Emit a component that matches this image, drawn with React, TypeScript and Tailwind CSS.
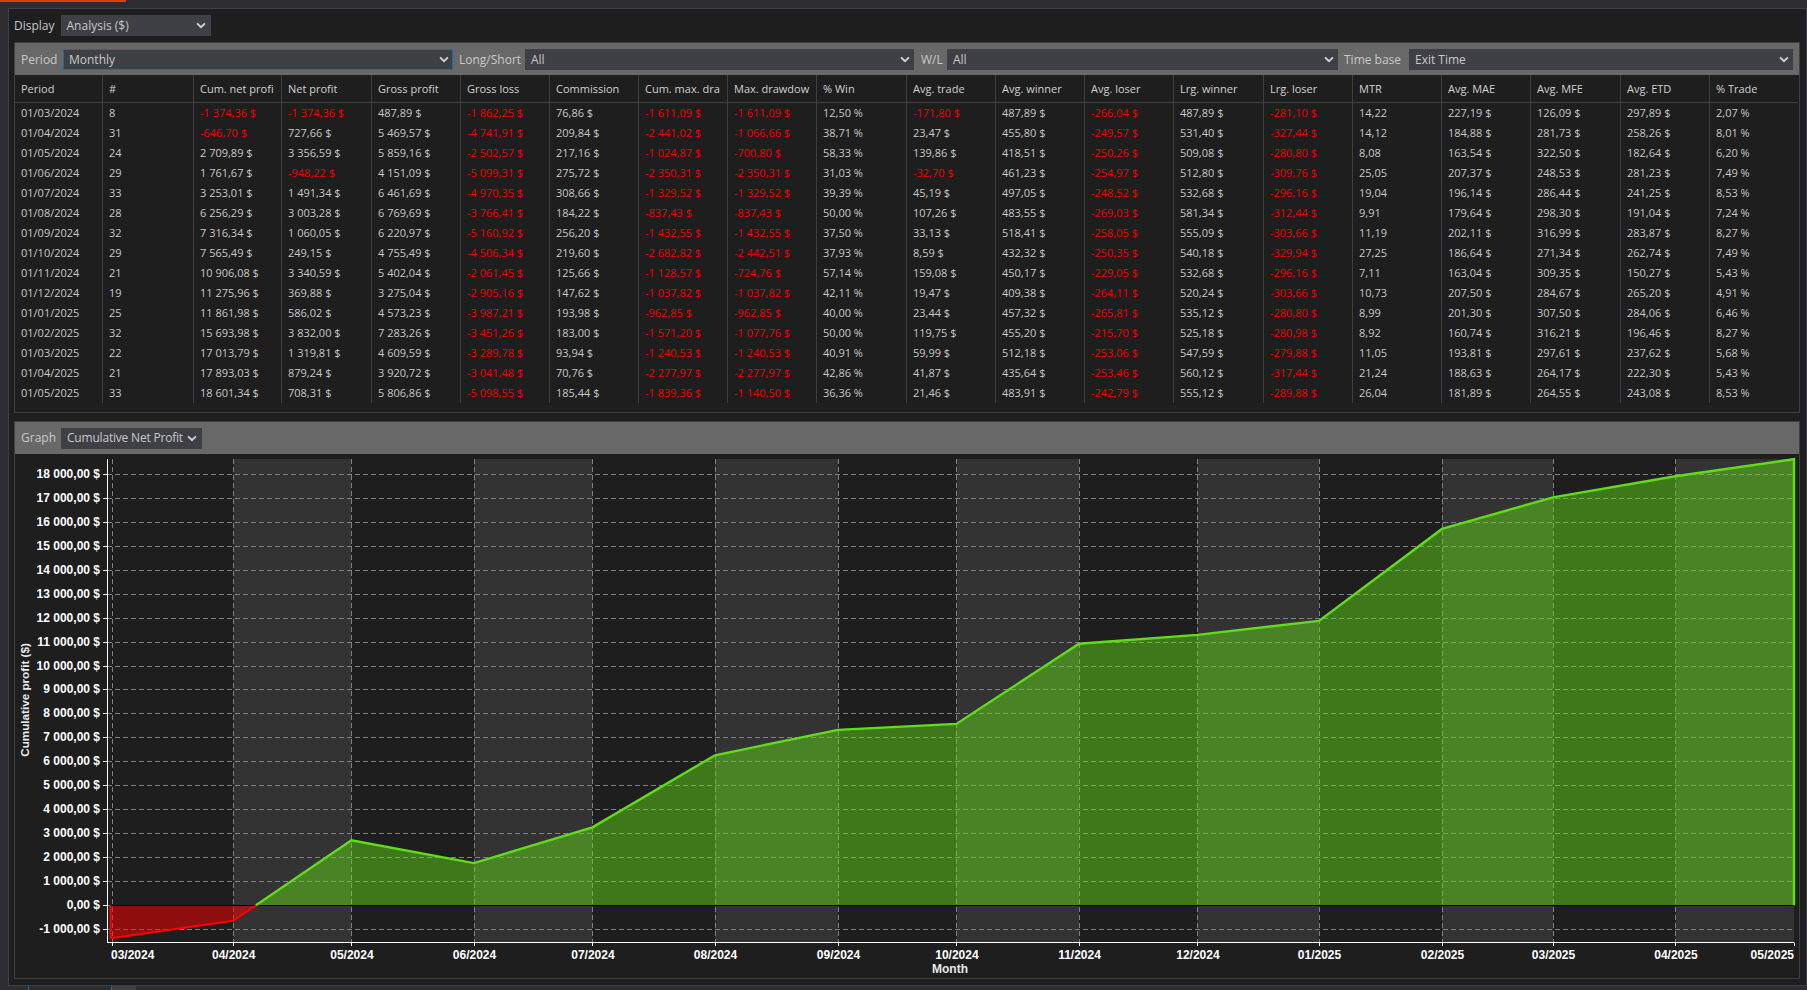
import React from "react";

const headers = ["Period","#","Cum. net profi","Net profit","Gross profit","Gross loss","Commission","Cum. max. dra","Max. drawdow","% Win","Avg. trade","Avg. winner","Avg. loser","Lrg. winner","Lrg. loser","MTR","Avg. MAE","Avg. MFE","Avg. ETD","% Trade"];
const widths = ["w-[88px]","w-[91px]","w-[88px]","w-[90px]","w-[89px]","w-[89px]","w-[89px]","w-[89px]","w-[89px]","w-[90px]","w-[89px]","w-[89px]","w-[89px]","w-[90px]","w-[89px]","w-[89px]","w-[89px]","w-[90px]","w-[89px]","w-[88px]"];
const rows = [
"01/03/2024|8|-1 374,36 $|-1 374,36 $|487,89 $|-1 862,25 $|76,86 $|-1 611,09 $|-1 611,09 $|12,50 %|-171,80 $|487,89 $|-266,04 $|487,89 $|-281,10 $|14,22|227,19 $|126,09 $|297,89 $|2,07 %",
"01/04/2024|31|-646,70 $|727,66 $|5 469,57 $|-4 741,91 $|209,84 $|-2 441,02 $|-1 066,66 $|38,71 %|23,47 $|455,80 $|-249,57 $|531,40 $|-327,44 $|14,12|184,88 $|281,73 $|258,26 $|8,01 %",
"01/05/2024|24|2 709,89 $|3 356,59 $|5 859,16 $|-2 502,57 $|217,16 $|-1 024,87 $|-700,80 $|58,33 %|139,86 $|418,51 $|-250,26 $|509,08 $|-280,80 $|8,08|163,54 $|322,50 $|182,64 $|6,20 %",
"01/06/2024|29|1 761,67 $|-948,22 $|4 151,09 $|-5 099,31 $|275,72 $|-2 350,31 $|-2 350,31 $|31,03 %|-32,70 $|461,23 $|-254,97 $|512,80 $|-309,76 $|25,05|207,37 $|248,53 $|281,23 $|7,49 %",
"01/07/2024|33|3 253,01 $|1 491,34 $|6 461,69 $|-4 970,35 $|308,66 $|-1 329,52 $|-1 329,52 $|39,39 %|45,19 $|497,05 $|-248,52 $|532,68 $|-296,16 $|19,04|196,14 $|286,44 $|241,25 $|8,53 %",
"01/08/2024|28|6 256,29 $|3 003,28 $|6 769,69 $|-3 766,41 $|184,22 $|-837,43 $|-837,43 $|50,00 %|107,26 $|483,55 $|-269,03 $|581,34 $|-312,44 $|9,91|179,64 $|298,30 $|191,04 $|7,24 %",
"01/09/2024|32|7 316,34 $|1 060,05 $|6 220,97 $|-5 160,92 $|256,20 $|-1 432,55 $|-1 432,55 $|37,50 %|33,13 $|518,41 $|-258,05 $|555,09 $|-303,66 $|11,19|202,11 $|316,99 $|283,87 $|8,27 %",
"01/10/2024|29|7 565,49 $|249,15 $|4 755,49 $|-4 506,34 $|219,60 $|-2 682,82 $|-2 442,51 $|37,93 %|8,59 $|432,32 $|-250,35 $|540,18 $|-329,94 $|27,25|186,64 $|271,34 $|262,74 $|7,49 %",
"01/11/2024|21|10 906,08 $|3 340,59 $|5 402,04 $|-2 061,45 $|125,66 $|-1 128,57 $|-724,76 $|57,14 %|159,08 $|450,17 $|-229,05 $|532,68 $|-296,16 $|7,11|163,04 $|309,35 $|150,27 $|5,43 %",
"01/12/2024|19|11 275,96 $|369,88 $|3 275,04 $|-2 905,16 $|147,62 $|-1 037,82 $|-1 037,82 $|42,11 %|19,47 $|409,38 $|-264,11 $|520,24 $|-303,66 $|10,73|207,50 $|284,67 $|265,20 $|4,91 %",
"01/01/2025|25|11 861,98 $|586,02 $|4 573,23 $|-3 987,21 $|193,98 $|-962,85 $|-962,85 $|40,00 %|23,44 $|457,32 $|-265,81 $|535,12 $|-280,80 $|8,99|201,30 $|307,50 $|284,06 $|6,46 %",
"01/02/2025|32|15 693,98 $|3 832,00 $|7 283,26 $|-3 451,26 $|183,00 $|-1 571,20 $|-1 077,76 $|50,00 %|119,75 $|455,20 $|-215,70 $|525,18 $|-280,98 $|8,92|160,74 $|316,21 $|196,46 $|8,27 %",
"01/03/2025|22|17 013,79 $|1 319,81 $|4 609,59 $|-3 289,78 $|93,94 $|-1 240,53 $|-1 240,53 $|40,91 %|59,99 $|512,18 $|-253,06 $|547,59 $|-279,88 $|11,05|193,81 $|297,61 $|237,62 $|5,68 %",
"01/04/2025|21|17 893,03 $|879,24 $|3 920,72 $|-3 041,48 $|70,76 $|-2 277,97 $|-2 277,97 $|42,86 %|41,87 $|435,64 $|-253,46 $|560,12 $|-317,44 $|21,24|188,63 $|264,17 $|222,30 $|5,43 %",
"01/05/2025|33|18 601,34 $|708,31 $|5 806,86 $|-5 098,55 $|185,44 $|-1 839,36 $|-1 140,50 $|36,36 %|21,46 $|483,91 $|-242,79 $|555,12 $|-289,88 $|26,04|181,89 $|264,55 $|243,08 $|8,53 %",
].map((r) => r.split("|"));

function Chevron() {
  return (
    <svg width="10" height="7" viewBox="0 0 11 8" className="shrink-0">
      <path d="M1 1.5 L5.5 6 L10 1.5" fill="none" stroke="#d0d0d0" strokeWidth="2.2" />
    </svg>
  );
}

function Select({ value, className }: { value: string; className: string }) {
  return (
    <div className={"flex items-center justify-between bg-[#3f3f46] text-[#c8c8c8] pl-[6px] shrink-0 " + className}>
      <span className="whitespace-nowrap">{value}</span>
      <Chevron />
    </div>
  );
}

const months = ["03/2024","04/2024","05/2024","06/2024","07/2024","08/2024","09/2024","10/2024","11/2024","12/2024","01/2025","02/2025","03/2025","04/2025","05/2025"];
const mx = [111.5,233.2,351.4,474,592.4,715,838,956.4,1079,1197.4,1319,1442,1553,1675.4,1794];
const cum = [-1374.36,-646.7,2709.89,1761.67,3253.01,6256.29,7316.34,7565.49,10906.08,11275.96,11861.98,15693.98,17013.79,17893.03,18601.34];
const Y = (v: number) => 905.3 - v * 0.02398;
const yTicks = Array.from({ length: 20 }, (_, i) => 18000 - i * 1000);
const fmtY = (v: number) => {
  const s = Math.abs(v).toString();
  const t = s.length > 3 ? s.slice(0, -3) + " " + s.slice(-3) : s;
  return (v < 0 ? "-" : "") + t + ",00 $";
};
const crossX = mx[1] + ((mx[2] - mx[1]) * 646.7) / (646.7 + 2709.89);
const linePts = mx.map((x, i) => `${x},${Y(cum[i])}`);
const greenTop = [`${crossX},${Y(0)}`, ...linePts.slice(2)].join(" ");
const redTop = [`${mx[0] - 1},${Y(0)}`, `${mx[0] - 1},${Y(cum[0])}`, `${mx[1]},${Y(cum[1])}`, `${crossX},${Y(0)}`].join(" ");

function Chart() {
  return (
    <svg width="1783" height="525" viewBox="15 454 1783 525" className="block font-['Liberation_Sans',sans-serif] font-bold">
      {[1, 3, 5, 7, 9, 11, 13].map((i) => (
        <rect key={i} x={mx[i]} y={459} width={mx[i + 1] - mx[i]} height={483} fill="#333333" />
      ))}
      {yTicks.map((v) => (
        <line key={v} x1={107} x2={1794} y1={Math.round(Y(v)) + 0.5} y2={Math.round(Y(v)) + 0.5} stroke="#808080" strokeDasharray="5 3" />
      ))}
      {mx.slice(0, -1).map((x) => (
        <line key={x} x1={Math.round(x) + 0.5} x2={Math.round(x) + 0.5} y1={459} y2={942} stroke="#808080" strokeDasharray="5 3" />
      ))}
      <polygon points={`${greenTop} 1794,${Y(0)}`} fill="#63dc18" fillOpacity="0.48" />
      <polygon points={redTop} fill="#ff0000" fillOpacity="0.5" />
      <line x1={110} x2={1794} y1={905.5} y2={905.5} stroke="#000000" />
      <polyline points={redTop} fill="none" stroke="#ff0000" strokeWidth="2" />
      <polyline points={`${greenTop} 1794,${Y(0)}`} fill="none" stroke="#60dc18" strokeWidth="2.4" />
      <line x1={107.5} x2={107.5} y1={459} y2={943} stroke="#ffffff" />
      <line x1={107} x2={1794.5} y1={942.5} y2={942.5} stroke="#ffffff" />
      {yTicks.map((v) => (
        <g key={v}>
          <line x1={103} x2={107} y1={Math.round(Y(v)) + 0.5} y2={Math.round(Y(v)) + 0.5} stroke="#ffffff" />
          <text x={100} y={Y(v) + 4} textAnchor="end" fontSize="12" fill="#ffffff">{fmtY(v)}</text>
        </g>
      ))}
      {mx.map((x, i) => (
        <g key={x}>
          <line x1={Math.round(x) + 0.5} x2={Math.round(x) + 0.5} y1={943} y2={946} stroke="#ffffff" />
          <text x={i === 0 ? 111 : i === 14 ? 1794 : x + 0.5} y={959} textAnchor={i === 0 ? "start" : i === 14 ? "end" : "middle"} fontSize="12" fill="#ffffff">{months[i]}</text>
        </g>
      ))}
      <text x={950} y={973} textAnchor="middle" fontSize="12" fill="#e8e8e8">Month</text>
      <text transform="translate(29 700) rotate(-90)" textAnchor="middle" fontSize="11.7" fill="#e8e8e8">Cumulative profit ($)</text>
    </svg>
  );
}

export default function App() {
  return (
    <div className="w-[1807px] h-[990px] overflow-hidden bg-[#2d2d30] flex flex-col font-['Open_Sans',sans-serif] text-[12px] text-[#c8c8c8]">
      <div className="h-[8px] shrink-0">
        <div className="h-[2px] w-[126px] bg-[#d8420f]" />
      </div>
      <div className="flex-1 ml-[8px] border border-[#3f3f46] bg-[#1e1e1e] pl-[5px] pr-[6px] pt-[6px] flex flex-col min-h-0">
        <div className="flex items-center h-[21px] gap-[6px]">
          <span>Display</span>
          <Select value="Analysis ($)" className="w-[150px] h-[21px] pr-[5px]" />
        </div>
        <div className="mt-[6px] border border-[#3f3f3f] h-[371px] shrink-0">
          <div className="h-[32px] bg-[#686868] flex items-center pl-[6px] pt-[1px]">
            <span className="w-[37px]">Period</span>
            <div className="ml-[5px] w-[390px] h-[21px] flex items-center justify-between bg-[#3f3f46] border border-[#1c6ea4] pl-[5px] pr-[3px]">
              <span>Monthly</span>
              <Chevron />
            </div>
            <span className="ml-[6px] w-[61px]">Long/Short</span>
            <Select value="All" className="ml-[5px] w-[389px] h-[21px] pr-[4px]" />
            <span className="ml-[7px] w-[21px]">W/L</span>
            <Select value="All" className="ml-[5px] w-[391px] h-[21px] pr-[4px]" />
            <span className="ml-[6px] w-[60px]">Time base</span>
            <Select value="Exit Time" className="ml-[5px] w-[384px] h-[21px] pr-[4px]" />
          </div>
          <table className="table-fixed w-[1783px] border-separate border-spacing-0 text-[11px]">
            <colgroup>
              {widths.map((w, i) => (
                <col key={i} className={w} />
              ))}
            </colgroup>
            <thead>
              <tr>
                {headers.map((h, i) => (
                  <th key={h} className={"h-[28px] font-normal text-left pl-[6px] pr-[3px] pt-[2px] border-b border-[#3f3f3f] text-[#d0d0d0] " + (i < 19 ? "border-r" : "")}>
                    <div className="overflow-hidden whitespace-nowrap">{h}</div>
                  </th>
                ))}
              </tr>
            </thead>
            <tbody>
              {rows.map((r) => (
                <tr key={r[0]}>
                  {r.map((c, i) => (
                    <td key={i} className={"h-[20px] pl-[6px] whitespace-nowrap border-[#3f3f3f] " + (i < 19 ? "border-r " : "") + (c.startsWith("-") ? "text-[#f00000]" : "text-[#c8c8c8]")}>
                      {c}
                    </td>
                  ))}
                </tr>
              ))}
            </tbody>
          </table>
        </div>
        <div className="mt-[8px] border border-[#3f3f3f] h-[558px] shrink-0">
          <div className="h-[32px] bg-[#686868] flex items-center pl-[6px]">
            <span className="w-[34px]">Graph</span>
            <div className="ml-[6px] w-[141px] h-[21px] flex items-center justify-between bg-[#3f3f46] pl-[6px] pr-[5px]">
              <span className="whitespace-nowrap tracking-[-0.2px]">Cumulative Net Profit</span>
              <Chevron />
            </div>
          </div>
          <Chart />
        </div>
      </div>
      <div className="h-[4px] shrink-0 flex">
        <div className="ml-[28px] w-px bg-[#1c6ea4]" />
        <div className="ml-[82px] w-px bg-[#1c6ea4]" />
        <div className="w-[24px] bg-[#3f3f46]" />
      </div>
    </div>
  );
}
